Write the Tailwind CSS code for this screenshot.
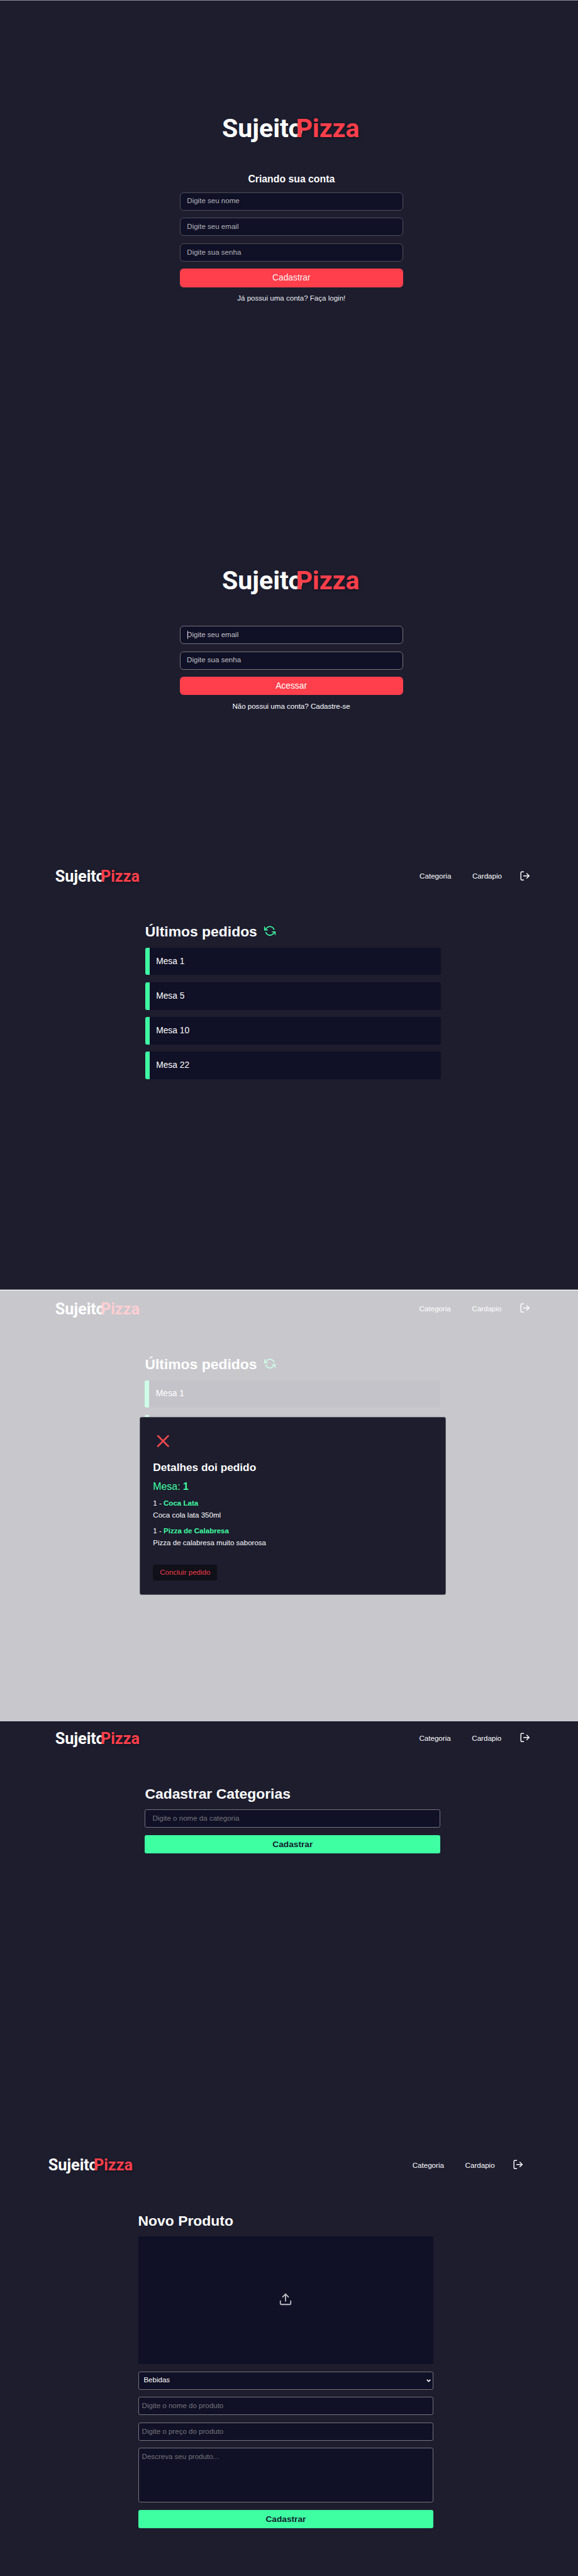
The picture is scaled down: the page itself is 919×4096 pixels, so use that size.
<!DOCTYPE html>
<html lang="pt-BR">
<head>
<meta charset="utf-8">
<title>SujeitoPizza</title>
<script src="https://cdn.jsdelivr.net/npm/@tailwindcss/browser@4"></script>
</head>
<body class="w-[919px] bg-[#1d1d2e] font-['Liberation_Sans',Arial,sans-serif] text-[11.55px] leading-none text-white">

<!-- Shared symbols -->
<svg class="hidden">
  <symbol id="refresh" viewBox="0 0 24 24" fill="none" stroke="currentColor" stroke-width="2" stroke-linecap="round" stroke-linejoin="round"><path d="M1 4v6h6"/><path d="M23 20v-6h-6"/><path d="M20.49 9A9 9 0 0 0 5.64 5.64L1 10m22 4l-4.64 4.36A9 9 0 0 1 3.51 15"/></symbol>
  <symbol id="logout" viewBox="0 0 24 24" fill="none" stroke="currentColor" stroke-width="2" stroke-linecap="round" stroke-linejoin="round"><path d="M9 21H5a2 2 0 0 1-2-2V5a2 2 0 0 1 2-2h4"/><path d="M16 17l5-5-5-5"/><path d="M21 12H9"/></symbol>
</svg>

<!-- Cadastro -->
<section class="h-[704px] border-t border-[#8b8b93] flex flex-col items-center">
  <svg class="mt-[176.5px] mr-[-5.5px] w-[220px] h-[52px] shrink-0 overflow-visible font-['Roboto',sans-serif] font-bold text-[40.8px]" viewBox="0 0 220 52"><text x="1" y="40" textLength="128.7" lengthAdjust="spacingAndGlyphs" fill="#fff">Sujeito</text><text x="118.4" y="40" textLength="101" lengthAdjust="spacingAndGlyphs" fill="#ff3f4b" class="[text-shadow:0_1px_4px_rgb(0_0_0/0.5)]">Pizza</text></svg>
  <form class="mt-[45px] mr-[-7.6px] w-[355px] flex flex-col">
    <h1 class="h-[20px] leading-[20px] text-center font-bold text-[15.8px]">Criando sua conta</h1>
    <div class="mt-[11px] h-[29.3px] rounded-[6px] border border-[#4f4f5c] bg-[#101026] px-[10.5px] flex items-center text-[#b4b4ba]">Digite seu nome</div>
    <div class="mt-[11.3px] h-[29.3px] rounded-[6px] border border-[#4f4f5c] bg-[#101026] px-[10.5px] flex items-center text-[#b4b4ba]">Digite seu email</div>
    <div class="mt-[11.3px] h-[29.3px] rounded-[6px] border border-[#4f4f5c] bg-[#101026] px-[10.5px] flex items-center text-[#b4b4ba]">Digite sua senha</div>
    <div class="mt-[11.3px] h-[29.3px] rounded-[6px] bg-[#ff3f4b] flex items-center justify-center text-[13.8px] text-[#fff0f1]">Cadastrar</div>
    <div class="mt-[9.5px] h-[16px] leading-[16px] text-center text-[#eeeef0]">Já possui uma conta? Faça login!</div>
  </form>
</section>

<!-- Login -->
<section class="h-[663px] flex flex-col items-center">
  <svg class="mt-[193px] mr-[-5.5px] w-[220px] h-[52px] shrink-0 overflow-visible font-['Roboto',sans-serif] font-bold text-[40.8px]" viewBox="0 0 220 52"><text x="1" y="40" textLength="128.7" lengthAdjust="spacingAndGlyphs" fill="#fff">Sujeito</text><text x="118.4" y="40" textLength="101" lengthAdjust="spacingAndGlyphs" fill="#ff3f4b" class="[text-shadow:0_1px_4px_rgb(0_0_0/0.5)]">Pizza</text></svg>
  <form class="mt-[46px] mr-[-7.2px] w-[355px] flex flex-col">
    <div class="relative h-[29px] rounded-[6px] border border-[#74747d] bg-[#101026] px-[10.5px] flex items-center text-[#c2c2c7]"><i class="absolute left-[11px] top-[7px] w-px h-[13px] bg-[#d0d0d4]"></i>Digite seu email</div>
    <div class="mt-[11.6px] h-[29px] rounded-[6px] border border-[#74747d] bg-[#101026] px-[10.5px] flex items-center text-[#c2c2c7]">Digite sua senha</div>
    <div class="mt-[11.6px] h-[29px] rounded-[6px] bg-[#ff3f4b] flex items-center justify-center text-[13.8px]">Acessar</div>
    <div class="mt-[9.8px] h-[16px] leading-[16px] text-center">Não possui uma conta? Cadastre-se</div>
  </form>
</section>

<!-- Pedidos -->
<section class="h-[683px] pt-[10.3px]">
  <header class="h-[32px] flex items-center pl-[87.1px] pr-[75.2px]">
    <svg class="w-[135.5px] h-[32px] overflow-visible font-['Roboto',sans-serif] font-bold text-[40.8px]" viewBox="0 0 220 52"><text x="1" y="40" textLength="128.7" lengthAdjust="spacingAndGlyphs" fill="#fff">Sujeito</text><text x="118.4" y="40" textLength="101" lengthAdjust="spacingAndGlyphs" fill="#ff3f4b" class="[text-shadow:0_1px_4px_rgb(0_0_0/0.5)]">Pizza</text></svg>
    <nav class="ml-auto flex items-center text-[11.6px]"><span>Categoria</span><span class="ml-[33.6px]">Cardapio</span><svg class="ml-[28.4px] mb-[2px] size-[17.4px]"><use href="#logout"/></svg></nav>
  </header>
  <main class="mt-[59.4px] ml-[230.8px] w-[469.8px]">
    <div class="h-[26px] flex items-center"><h1 class="font-bold text-[22.9px]">Últimos pedidos</h1><svg class="ml-[11.5px] mb-[2px] size-[18.4px] text-[#3fffa3]"><use href="#refresh"/></svg></div>
    <div class="mt-[12.4px] flex flex-col gap-[11.7px] text-[13.8px]">
      <div class="h-[43.4px] flex items-center rounded-[3px] overflow-hidden bg-[#101026]"><i class="w-[7px] h-full bg-[#3fffa3]"></i><span class="ml-[10.4px]">Mesa 1</span></div>
      <div class="h-[43.4px] flex items-center rounded-[3px] overflow-hidden bg-[#101026]"><i class="w-[7px] h-full bg-[#3fffa3]"></i><span class="ml-[10.4px]">Mesa 5</span></div>
      <div class="h-[43.4px] flex items-center rounded-[3px] overflow-hidden bg-[#101026]"><i class="w-[7px] h-full bg-[#3fffa3]"></i><span class="ml-[10.4px]">Mesa 10</span></div>
      <div class="h-[43.4px] flex items-center rounded-[3px] overflow-hidden bg-[#101026]"><i class="w-[7px] h-full bg-[#3fffa3]"></i><span class="ml-[10.4px]">Mesa 22</span></div>
    </div>
  </main>
</section>

<!-- Detalhes do pedido -->
<section class="relative h-[687px] bg-[#c8c7cc]">
  <div class="h-px bg-[#77777f]"></div>
  <div class="h-px bg-[#fbfbfb]"></div>
  <header class="mt-[12.6px] h-[32px] flex items-center pl-[86.5px] pr-[75.9px]">
    <svg class="w-[135.5px] h-[32px] overflow-visible font-['Roboto',sans-serif] font-bold text-[40.8px]" viewBox="0 0 220 52"><text x="1" y="40" textLength="128.7" lengthAdjust="spacingAndGlyphs" fill="#fff">Sujeito</text><text x="118.4" y="40" textLength="101" lengthAdjust="spacingAndGlyphs" fill="#ffcfd2">Pizza</text></svg>
    <nav class="ml-auto flex items-center text-[11.6px]"><span>Categoria</span><span class="ml-[33.6px]">Cardapio</span><svg class="ml-[28.4px] mb-[2px] size-[17.4px]"><use href="#logout"/></svg></nav>
  </header>
  <main class="mt-[59.4px] ml-[230.4px] w-[469.8px]">
    <div class="h-[26px] flex items-center"><h1 class="font-bold text-[22.9px]">Últimos pedidos</h1><svg class="ml-[11.5px] mb-[2px] size-[18.4px] text-[#cfffe8]"><use href="#refresh"/></svg></div>
    <div class="mt-[12.6px] flex flex-col gap-[11.7px] text-[13.8px]">
      <div class="h-[43.4px] flex items-center rounded-[3px] overflow-hidden bg-[#c4c3c9]"><i class="w-[7px] h-full bg-[#cfffe8]"></i><span class="ml-[10.4px]">Mesa 1</span></div>
      <div class="h-[43.4px] flex items-center rounded-[3px] overflow-hidden bg-[#c4c3c9]"><i class="w-[7px] h-full bg-[#cfffe8]"></i></div>
    </div>
  </main>
  <div class="absolute left-[222px] top-[203.3px] w-[486.6px] h-[282.5px] rounded-[3px] border border-[#5a5a67] bg-[#1d1d2e] pl-[20.3px]">
    <svg class="mt-[21px] w-[32.6px] h-[32.6px]" viewBox="0 0 24 24" fill="none" stroke="#ee484b" stroke-width="2" stroke-linecap="round"><path d="M18 6L6 18M6 6l12 12"/></svg>
    <h2 class="mt-[13.8px] h-[22px] leading-[22px] font-bold text-[17.25px]">Detalhes doi pedido</h2>
    <p class="mt-[9px] h-[22px] leading-[22px] text-[15.9px] text-[#3fffa3]">Mesa: <b>1</b></p>
    <p class="mt-[7.5px] h-[16px] leading-[16px]">1 - <b class="text-[#3fffa3]">Coca Lata</b></p>
    <p class="mt-[3.2px] h-[16px] leading-[16px]">Coca cola lata 350ml</p>
    <p class="mt-[8.4px] h-[16px] leading-[16px]">1 - <b class="text-[#3fffa3]">Pizza de Calabresa</b></p>
    <p class="mt-[3.2px] h-[16px] leading-[16px]">Pizza de calabresa muito saborosa</p>
    <div class="mt-[27.5px] w-[102px] h-[24.6px] rounded-[3px] bg-[#101018] flex items-center justify-center text-[#ee3c48]">Concluir pedido</div>
  </div>
</section>

<!-- Categorias -->
<section class="h-[668px] pt-[10.6px]">
  <header class="h-[32px] flex items-center pl-[86.5px] pr-[75.9px]">
    <svg class="w-[135.5px] h-[32px] overflow-visible font-['Roboto',sans-serif] font-bold text-[40.8px]" viewBox="0 0 220 52"><text x="1" y="40" textLength="128.7" lengthAdjust="spacingAndGlyphs" fill="#fff">Sujeito</text><text x="118.4" y="40" textLength="101" lengthAdjust="spacingAndGlyphs" fill="#ff3f4b" class="[text-shadow:0_1px_4px_rgb(0_0_0/0.5)]">Pizza</text></svg>
    <nav class="ml-auto flex items-center text-[11.6px]"><span>Categoria</span><span class="ml-[33.6px]">Cardapio</span><svg class="ml-[28.4px] mb-[2px] size-[17.4px]"><use href="#logout"/></svg></nav>
  </header>
  <main class="mt-[59px] ml-[230.4px] w-[469.8px]">
    <h1 class="h-[26px] leading-[26px] font-bold text-[22.9px]">Cadastrar Categorias</h1>
    <div class="mt-[12.9px] h-[29px] rounded-[3px] border border-[#74747d] bg-[#101026] px-[11px] flex items-center text-[#75757a]">Digite o nome da categoria</div>
    <div class="mt-[11.6px] h-[29px] rounded-[3px] bg-[#3fffa3] flex items-center justify-center font-bold text-[13.7px] text-[#10222e]">Cadastrar</div>
  </main>
</section>

<!-- Produto -->
<section class="h-[691px] pt-[21.4px]">
  <header class="h-[32px] flex items-center pl-[75.9px] pr-[86.6px]">
    <svg class="w-[135.5px] h-[32px] overflow-visible font-['Roboto',sans-serif] font-bold text-[40.8px]" viewBox="0 0 220 52"><text x="1" y="40" textLength="128.7" lengthAdjust="spacingAndGlyphs" fill="#fff">Sujeito</text><text x="118.4" y="40" textLength="101" lengthAdjust="spacingAndGlyphs" fill="#ff3f4b" class="[text-shadow:0_1px_4px_rgb(0_0_0/0.5)]">Pizza</text></svg>
    <nav class="ml-auto flex items-center text-[11.6px]"><span>Categoria</span><span class="ml-[33.6px]">Cardapio</span><svg class="ml-[28.4px] mb-[2px] size-[17.4px]"><use href="#logout"/></svg></nav>
  </header>
  <main class="mt-[59.4px] ml-[219.6px] w-[469.6px]">
    <h1 class="h-[26px] leading-[26px] font-bold text-[22.9px]">Novo Produto</h1>
    <div class="mt-[12.3px] h-[202.8px] rounded-[3px] bg-[#101026] flex items-center justify-center">
      <svg class="mt-[-2px] size-[22px]" viewBox="0 0 24 24" fill="none" stroke="#bcbcc3" stroke-width="2" stroke-linecap="round" stroke-linejoin="round"><path d="M21 15v4a2 2 0 0 1-2 2H5a2 2 0 0 1-2-2v-4"/><path d="M17 8l-5-5-5 5"/><path d="M12 3v12"/></svg>
    </div>
    <div class="mt-[11.8px] h-[29px] rounded-[3px] border border-[#74747d] bg-[#101026] pl-[7.8px] pr-[3px] flex items-center justify-between"><span>Bebidas</span><svg class="w-[7px] h-[5px]" viewBox="0 0 7 5" fill="none" stroke="#fff" stroke-width="1.7"><path d="M.7 .9l2.8 2.7L6.3 .9"/></svg></div>
    <div class="mt-[11.6px] h-[29px] rounded-[3px] border border-[#74747d] bg-[#101026] px-[5px] flex items-center text-[#75757a]">Digite o nome do produto</div>
    <div class="mt-[11.6px] h-[29px] rounded-[3px] border border-[#74747d] bg-[#101026] px-[5px] flex items-center text-[#75757a]">Digite o preço do produto</div>
    <div class="mt-[11.6px] h-[87px] rounded-[3px] border border-[#74747d] bg-[#101026] px-[5px] pt-[4.5px] leading-[16px] text-[#75757a]">Descreva seu produto...</div>
    <div class="mt-[11.6px] h-[29px] rounded-[3px] bg-[#3fffa3] flex items-center justify-center font-bold text-[13.7px] text-[#10222e]">Cadastrar</div>
  </main>
</section>
</body>
</html>
